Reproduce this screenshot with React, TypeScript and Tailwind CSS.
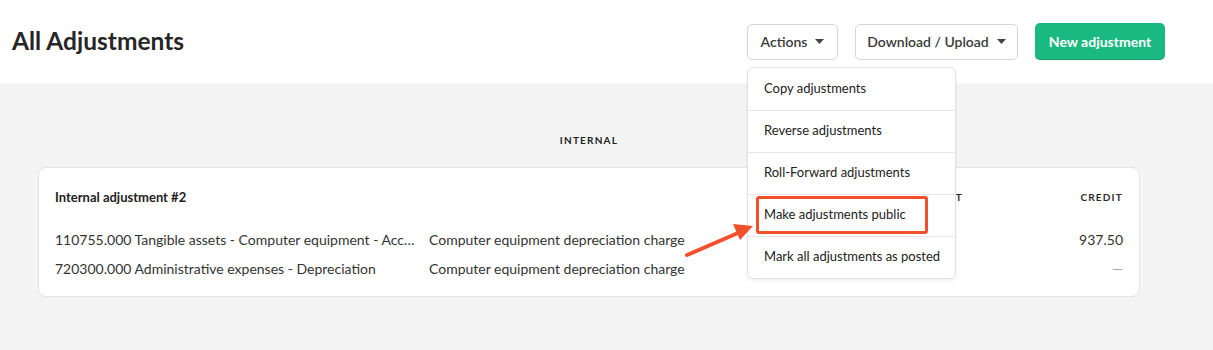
import { ReactNode } from "react";

const menuItems = [
  "Copy adjustments",
  "Reverse adjustments",
  "Roll-Forward adjustments",
  "Make adjustments public",
  "Mark all adjustments as posted",
];

const lines = [
  {
    account: "110755.000 Tangible assets - Computer equipment - Accumulated depreciation",
    memo: "Computer equipment depreciation charge",
    credit: "937.50",
  },
  {
    account: "720300.000 Administrative expenses - Depreciation",
    memo: "Computer equipment depreciation charge",
    credit: "—",
  },
];

function Caret() {
  return (
    <svg width="9" height="5" viewBox="0 0 9 5" className="ml-2 fill-[#444]" aria-hidden="true">
      <path d="M0 0h9L4.5 5z" />
    </svg>
  );
}

function OutlineButton({ children, w }: { children: ReactNode; w: string }) {
  return (
    <button className={`flex h-[36px] ${w} items-center justify-center rounded-[5px] border border-[#d6d6d6] bg-white text-[14px] font-semibold text-[#3a3a3a]`}>
      {children}
      <Caret />
    </button>
  );
}

export default function App() {
  return (
    <div className="relative h-[350px] overflow-hidden bg-[#f4f4f4] font-['Lato','Open_Sans',sans-serif] text-[#2b2b2b]">
      <header className="flex h-[83px] items-center justify-between bg-white pl-[12px] pr-[48px]">
        <h1 className="text-[24.5px] font-bold text-[#262626]">All Adjustments</h1>
        <div className="flex items-center gap-[17px]">
          <div className="relative">
            <OutlineButton w="w-[91px]">Actions</OutlineButton>
            <div className="absolute left-0 top-[43px] z-10 w-[209px] overflow-hidden rounded-[6px] border border-[#e2e2e2] bg-white shadow-[0_2px_4px_rgba(0,0,0,0.06)]">
              {menuItems.map((item, i) => (
                <div
                  key={item}
                  className={`flex h-[42px] items-center whitespace-nowrap px-[16px] text-[13px] text-[#222] ${i > 0 ? "border-t border-[#e6e6e6]" : ""}`}
                >
                  {item}
                </div>
              ))}
            </div>
            <div className="pointer-events-none absolute left-[9px] top-[172px] z-20 h-[38px] w-[172px] rounded-[3px] border-[3px] border-[#f2502c]" />
          </div>
          <OutlineButton w="w-[163px]">Download / Upload</OutlineButton>
          <button className="h-[37px] w-[130px] rounded-[5px] border-b border-[#139968] bg-[#1bb982] text-[14px] font-bold text-white">
            New adjustment
          </button>
        </div>
      </header>

      <main className="ml-[38px] w-[1102px] pt-[50px]">
        <div className="text-center text-[10px] font-bold tracking-[0.12em] text-[#222]">INTERNAL</div>
        <section className="mt-[19px] rounded-[8px] border border-[#e3e3e3] bg-white px-[16px] pb-[18px] pt-[20px]">
          <div className="flex items-center text-[13px]">
            <div className="flex-1 font-bold text-[#222]">Internal adjustment #2</div>
            <div className="w-[160px] text-right text-[10px] font-bold tracking-[0.12em]">DEBIT</div>
            <div className="w-[160px] text-right text-[10px] font-bold tracking-[0.12em]">CREDIT</div>
          </div>
          <div className="mt-[22px] flex flex-col gap-[10px]">
            {lines.map((l) => (
              <div key={l.account} className="flex h-[19px] items-center text-[14px] text-[#333]">
                <div className="w-[362px] truncate">{l.account}</div>
                <div className="ml-[12px] flex-1">{l.memo}</div>
                <div className="w-[160px]" />
                <div className={`w-[160px] text-right ${l.credit === "—" ? "text-[#aaa]" : ""}`}>{l.credit}</div>
              </div>
            ))}
          </div>
        </section>
      </main>

      <svg className="pointer-events-none absolute left-0 top-0 z-30" width="1213" height="350" aria-hidden="true">
        <line x1="687" y1="255" x2="738" y2="233" stroke="#f2502c" strokeWidth="4" strokeLinecap="round" />
        <path d="M753 226 L733 224 L740 240 Z" fill="#f2502c" />
      </svg>
    </div>
  );
}
